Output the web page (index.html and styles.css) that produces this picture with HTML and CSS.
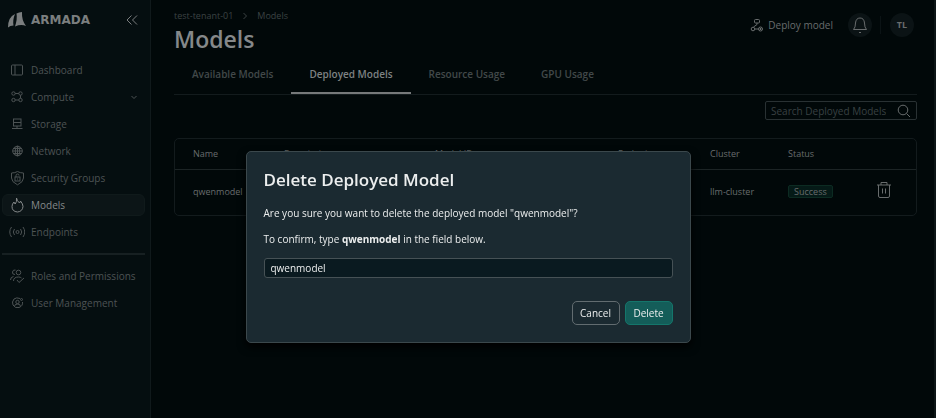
FILE: index.html
```html
<!DOCTYPE html>
<html lang="en">
<head>
<meta charset="utf-8">
<meta name="viewport" content="width=device-width, initial-scale=1.0">
<title>Models</title>
<link rel="stylesheet" href="styles.css">
</head>
<body>
<div class="app">
  <aside class="sidebar">
    <div class="brand">
      <svg class="brand-mark" viewBox="0 0 18 16"><path d="M0 15.500Q0 5 7 2Q4.500 8 5.500 13.500Q2 13.500 0 15.500ZM8.500 1.500Q11 0 14 0Q13.500 8 18 14Q13 12 7 14.500Q9.500 7 8.500 1.500Z"/></svg>
      <span class="brand-name">ARMADA</span>
      <button class="collapse" type="button" aria-label="Collapse menu">
        <svg class="icon" viewBox="0 0 12 12"><path d="M5.500 1.500L1 6l4.500 4.500M11 1.500L6.500 6l4.500 4.500"/></svg>
      </button>
    </div>
    <nav class="menu">
      <a class="menu-item" href="#">
        <svg class="icon" viewBox="0 0 16 16"><rect x="2.500" y="3" width="11" height="10" rx="1"/><path d="M6 3v10"/></svg>
        <span>Dashboard</span>
      </a>
      <a class="menu-item" href="#">
        <svg class="icon" viewBox="0 0 16 16"><circle cx="4.500" cy="4.500" r="1.700"/><circle cx="11.500" cy="4.500" r="1.700"/><circle cx="4.500" cy="11" r="1.700"/><circle cx="11.500" cy="11" r="1.700"/><path d="M6.200 4.500h3.600M6.200 11h3.600M11.500 6.200v3.100"/></svg>
        <span>Compute</span>
        <svg class="icon chevron" viewBox="0 0 8 8"><path d="M1.500 3L4 5.500 6.500 3"/></svg>
      </a>
      <a class="menu-item" href="#">
        <svg class="icon" viewBox="0 0 16 16"><rect x="4.500" y="3" width="7.500" height="7"/><path d="M4.500 6.500H12M8 10v2.500M3 12.500h10.500"/></svg>
        <span>Storage</span>
      </a>
      <a class="menu-item" href="#">
        <svg class="icon" viewBox="0 0 16 16"><circle cx="8.500" cy="8" r="4.800"/><ellipse cx="8.500" cy="8" rx="2.200" ry="4.800"/><path d="M8.500 3v10M3.700 8h9.600M4.500 5.500h8M4.500 10.500h8"/></svg>
        <span>Network</span>
      </a>
      <a class="menu-item" href="#">
        <svg class="icon" viewBox="0 0 16 16"><path d="M8.500 1.500Q11 3 14.500 3v5q0 4-6 6.800Q2.500 12 2.500 8V3q3.500 0 6-1.500z"/><rect x="6" y="7" width="5" height="4"/><path d="M7 7V5.500q0-1.500 1.500-1.500T10 5.500M8.500 8.500v1"/></svg>
        <span>Security Groups</span>
      </a>
      <a class="menu-item active" href="#">
        <svg class="icon" viewBox="0 0 16 16"><path d="M7.500 1Q8 4 10.500 6q.8-1 1-2Q14 7 14 9.500 13.500 14.500 8.500 15 3 14.500 3 9.500 3 7 5 5q.3 1.500 1.200 2Q8 5 7.500 1z"/></svg>
        <span>Models</span>
      </a>
      <a class="menu-item" href="#">
        <svg class="icon" viewBox="0 0 16 16"><circle cx="8.500" cy="8" r="1.500"/><path d="M5.500 5Q3 8 5.500 11M11.500 5Q14 8 11.500 11M2.500 3Q-1 8 2.500 13M14 3q3.500 5 0 10"/></svg>
        <span>Endpoints</span>
      </a>
      <hr class="menu-line">
      <a class="menu-item" href="#">
        <svg class="icon" viewBox="0 0 16 16"><circle cx="9.500" cy="4.500" r="2.300"/><path d="M6 6.500Q3 6.500 3.500 4 4 1.500 6.500 2M4.500 13q0-4 5-4 2 0 3 1M1.500 12q0-3 3-3.500M8 12l2 2.500 5-4.500"/></svg>
        <span>Roles and Permissions</span>
      </a>
      <a class="menu-item" href="#">
        <svg class="icon" viewBox="0 0 16 16"><path d="M11 3.500Q7.500 2 5 4 2.500 7 4 10q2 3.500 6 2.500 4-1.500 3.500-5.500"/><circle cx="8.500" cy="7" r="1.700"/><path d="M5.500 11.500q0-2.500 3-2.500t3 2.500"/><circle cx="12.500" cy="4.500" r="1"/></svg>
        <span>User Management</span>
      </a>
    </nav>
  </aside>

  <main class="content">
    <header class="topbar">
      <div>
        <nav class="breadcrumb" aria-label="Breadcrumb">
          <a href="#">test-tenant-01</a>
          <svg class="icon" viewBox="0 0 8 8"><path d="M2.500 1L5.500 4l-3 3"/></svg>
          <a href="#">Models</a>
        </nav>
        <h1>Models</h1>
      </div>
      <div class="actions">
        <button class="deploy" type="button">
          <svg class="icon" viewBox="0 0 14 14"><rect x="4.500" y="1.500" width="5" height="3.500" rx="1"/><path d="M7 5v1.500L3.500 9M4.500 11h4"/><circle cx="3" cy="11" r="1.800"/><circle cx="10.500" cy="11" r="2"/><path d="M9.500 11h2M10.500 10v2"/></svg>
          Deploy model
        </button>
        <button class="round" type="button" aria-label="Notifications">
          <svg class="icon bell" viewBox="0 0 16 18"><path d="M1.500 13.500Q3.500 11.500 3.500 7 4 2 8 2t4.500 5q0 4.500 2 6.500zM7 16.500h2"/></svg>
        </button>
        <span class="divider"></span>
        <button class="round avatar" type="button">TL</button>
      </div>
    </header>

    <nav class="tabs">
      <a href="#">Available Models</a>
      <a class="current" href="#">Deployed Models</a>
      <a href="#">Resource Usage</a>
      <a href="#">GPU Usage</a>
    </nav>

    <div class="search">
      <input type="search" placeholder="Search Deployed Models" aria-label="Search Deployed Models">
      <svg class="icon" viewBox="0 0 14 14"><circle cx="6" cy="6" r="4.800"/><path d="M9.500 9.500L13 13"/></svg>
    </div>

    <div class="table-box">
      <table>
        <thead>
          <tr>
            <th class="col-name">Name</th>
            <th class="col-desc">Description</th>
            <th class="col-id">Model ID</th>
            <th class="col-end">Endpoint</th>
            <th class="col-cluster">Cluster</th>
            <th class="col-status">Status</th>
            <th></th>
          </tr>
        </thead>
        <tbody>
          <tr>
            <td>qwenmodel</td>
            <td></td>
            <td></td>
            <td></td>
            <td>llm-cluster</td>
            <td><span class="badge">Success</span></td>
            <td>
              <button class="trash" type="button" aria-label="Delete qwenmodel">
                <svg class="icon" viewBox="0 0 16 18"><path d="M1 4h14M5 4V1.500h6V4M2.500 4v11q0 1.500 1.500 1.500h8q1.500 0 1.500-1.500V4M6.500 7.500v5M9.500 7.500v5"/></svg>
              </button>
            </td>
          </tr>
        </tbody>
      </table>
    </div>
  </main>
</div>

<div class="overlay">
  <form class="modal" role="dialog" aria-labelledby="modalTitle">
    <h2 id="modalTitle">Delete Deployed Model</h2>
    <p>Are you sure you want to delete the deployed model "qwenmodel"?</p>
    <p><label for="confirmName">To confirm, type <b>qwenmodel</b> in the field below.</label></p>
    <input id="confirmName" class="confirm" type="text" value="qwenmodel">
    <div class="modal-buttons">
      <button class="btn" type="button">Cancel</button>
      <button class="btn danger" type="submit">Delete</button>
    </div>
  </form>
</div>
</body>
</html>
```

FILE: styles.css
```css
* {
    box-sizing: border-box;
}

body {
    margin: 0;
    background: #010809;
    color: #686c6d;
    font-family: "Open Sans", "Noto Sans", sans-serif;
    font-size: 10px;
    line-height: 14px;
}

a {
    color: inherit;
    text-decoration: none;
}

button,
input {
    font: inherit;
    color: inherit;
}

button {
    padding: 0;
    border: none;
    background: none;
    cursor: pointer;
}

.icon {
    display: block;
    flex: none;
    fill: none;
    stroke: currentColor;
    stroke-width: 1;
}

.app {
    display: flex;
    min-height: 100vh;
    border-right: 2px solid #0d1516;
}

/* sidebar */
.sidebar {
    flex: none;
    width: 151px;
    padding: 8px 5px 0 2px;
    background: #050e10;
    border-right: 1px solid #10191b;
}

.brand {
    display: flex;
    align-items: center;
    height: 24px;
    padding: 0 7px 0 6px;
    color: #7b7e7f;
}

.brand-mark {
    width: 18px;
    height: 16px;
    fill: currentColor;
}

.brand-name {
    margin-left: 5px;
    font-family: "DejaVu Sans", sans-serif;
    font-size: 12px;
    font-weight: 700;
}

.collapse {
    margin-left: auto;
}

.collapse .icon {
    width: 12px;
    height: 12px;
}

.menu {
    display: flex;
    flex-direction: column;
    gap: 5px;
    margin-top: 27px;
    color: #4d5354;
}

.menu-item {
    display: flex;
    align-items: center;
    gap: 6px;
    height: 22px;
    padding: 0 6px;
    border: 1px solid transparent;
    border-radius: 6px;
}

.menu-item .icon {
    width: 16px;
    height: 16px;
}

.menu-item .chevron {
    width: 8px;
    height: 8px;
    margin-left: auto;
}

.menu-item.active {
    background: #0c1517;
    border-color: #101a1b;
    color: #85898a;
}

.menu-line {
    width: 100%;
    height: 2px;
    margin: 5px 0;
    border: none;
    background: #172022;
}

/* page */
.content {
    flex: 1;
    min-width: 0;
    padding: 8px 17px 0 23px;
}

.topbar {
    display: flex;
    justify-content: space-between;
}

.breadcrumb {
    display: flex;
    align-items: center;
    gap: 8px;
    height: 16px;
    color: #3c4344;
    font-size: 9px;
}

.breadcrumb .icon {
    width: 8px;
    height: 8px;
}

h1 {
    margin: 0;
    color: #85888a;
    font-size: 23px;
    font-weight: 600;
    line-height: 31px;
}

.actions {
    display: flex;
    align-items: center;
    height: 34px;
    padding-right: 3px;
}

.deploy {
    display: flex;
    align-items: center;
    gap: 4px;
    margin-right: 15px;
}

.deploy .icon {
    width: 14px;
    height: 14px;
}

.round {
    display: grid;
    place-items: center;
    width: 24px;
    height: 24px;
    border-radius: 50%;
    background: #0b1315;
}

.bell {
    width: 16px;
    height: 18px;
}

.divider {
    width: 1px;
    height: 18px;
    margin: 0 9px 0 8px;
    background: #0b1315;
}

.avatar {
    font-size: 9px;
    font-weight: 700;
}

.tabs {
    display: flex;
    border-bottom: 1px solid #131b1d;
    color: #42494a;
    font-weight: 600;
}

.tabs a {
    height: 39px;
    padding: 12px 18px 0;
}

.tabs .current {
    margin-bottom: -1px;
    border-bottom: 2px solid #76797a;
    color: #7e8283;
}

.search {
    display: flex;
    align-items: center;
    width: 152px;
    height: 19px;
    margin: 6px 0 18px auto;
    padding: 0 5px;
    border: 1px solid #293133;
    border-radius: 2px;
}

.search input {
    flex: 1;
    min-width: 0;
    padding: 0;
    border: none;
    outline: none;
    background: none;
}

.search input::placeholder {
    color: #394143;
    opacity: 1;
}

.search .icon {
    width: 14px;
    height: 14px;
}

.table-box {
    border: 1px solid #131b1d;
    border-radius: 5px;
}

table {
    width: 100%;
    border-collapse: collapse;
    table-layout: fixed;
    font-size: 9px;
}

th,
td {
    padding: 0 0 0 18px;
    text-align: left;
    font-weight: 400;
}

th {
    height: 30px;
    border-bottom: 1px solid #1c2425;
}

td {
    height: 46px;
}

.col-name {
    width: 91px;
}

.col-desc {
    width: 151px;
}

.col-id {
    width: 183px;
}

.col-end {
    width: 92px;
}

.col-cluster {
    width: 78px;
}

.col-status {
    width: 88px;
}

.badge {
    display: inline-block;
    padding: 0 5px;
    border: 1px solid #0c2b22;
    border-radius: 2px;
    background: #051a17;
    line-height: 11px;
}

.trash .icon {
    width: 16px;
    height: 18px;
}

/* dialog */
.overlay {
    position: fixed;
    inset: 0;
    display: flex;
    align-items: flex-start;
    justify-content: center;
    padding-top: 151px;
}

.modal {
    width: 445px;
    padding: 17px;
    border: 1px solid #3b484c;
    border-radius: 5px;
    background: #1b2a31;
    box-shadow: 0 4px 8px #000;
    color: #eceeee;
}

.modal h2 {
    margin: 0 0 15px;
    font-size: 17px;
    font-weight: 600;
    line-height: 22px;
}

.modal p {
    margin: 0 0 12px;
}

.confirm {
    display: block;
    width: 100%;
    height: 20px;
    margin-bottom: 23px;
    padding: 0 6px;
    border: 1px solid #465155;
    border-radius: 3px;
    outline: none;
    background: #0a1a20;
}

.modal-buttons {
    display: flex;
    justify-content: flex-end;
    gap: 5px;
}

.btn {
    width: 48px;
    height: 24px;
    border: 1px solid #626c70;
    border-radius: 5px;
}

.btn.danger {
    border-color: #14766b;
    background: #145d59;
}
```
